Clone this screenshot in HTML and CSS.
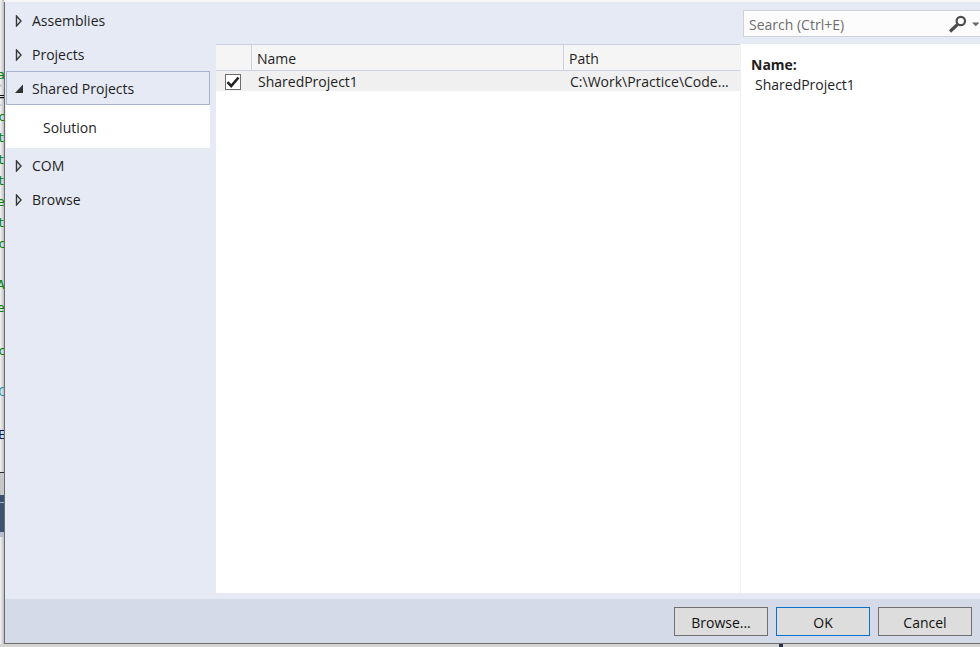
FILE: index.html
```html
<!DOCTYPE html>
<html lang="en">
<head>
<meta charset="utf-8">
<title>Reference Manager</title>
<link rel="stylesheet" href="styles.css">
</head>
<body>
<div class="screen">
  <div class="gutter" aria-hidden="true">
    <span class="band band-a"></span>
    <span class="band band-b"></span>
    <span class="band band-c"></span>
    <span class="band band-d"></span>
    <span class="band band-e"></span>
    <span class="band band-f"></span>
    <span class="code g1">a</span>
    <span class="code dark g2">=</span>
    <span class="code g3">c</span>
    <span class="code g4">t</span>
    <span class="code g5">t</span>
    <span class="code g6">t</span>
    <span class="code g7">e</span>
    <span class="code g8">t</span>
    <span class="code g9">c</span>
    <span class="code g10">A</span>
    <span class="code g11">e</span>
    <span class="code g12">c</span>
    <span class="code teal g13">C</span>
    <span class="code navy g14">E</span>
  </div>
  <div class="dialog">
    <div class="dialog-body">
      <nav class="tree">
        <div class="tree-row">
          <svg class="tri" width="8" height="12" viewBox="0 0 8 12"><path d="M1.5 1 6 6 1.5 11Z" fill="none" stroke="#3a3a3a" stroke-width="1.4"/></svg>
          <span>Assemblies</span>
        </div>
        <div class="tree-row">
          <svg class="tri" width="8" height="12" viewBox="0 0 8 12"><path d="M1.5 1 6 6 1.5 11Z" fill="none" stroke="#3a3a3a" stroke-width="1.4"/></svg>
          <span>Projects</span>
        </div>
        <div class="tree-row selected">
          <svg class="tri" width="8" height="12" viewBox="0 0 8 12"><path d="M0 10 8 1.5V10Z" fill="#333"/></svg>
          <span>Shared Projects</span>
        </div>
        <div class="tree-child">Solution</div>
        <div class="tree-row">
          <svg class="tri" width="8" height="12" viewBox="0 0 8 12"><path d="M1.5 1 6 6 1.5 11Z" fill="none" stroke="#3a3a3a" stroke-width="1.4"/></svg>
          <span>COM</span>
        </div>
        <div class="tree-row">
          <svg class="tri" width="8" height="12" viewBox="0 0 8 12"><path d="M1.5 1 6 6 1.5 11Z" fill="none" stroke="#3a3a3a" stroke-width="1.4"/></svg>
          <span>Browse</span>
        </div>
      </nav>
      <div class="content">
        <div class="topbar">
          <div class="search">
            <span class="search-text">Search (Ctrl+E)</span>
            <svg class="search-icon" width="32" height="22" viewBox="0 0 32 22">
              <circle cx="13.8" cy="8" r="4.2" fill="none" stroke="#4d4d4d" stroke-width="2.2"/>
              <path d="M10.5 11.5 3 18.5" stroke="#4d4d4d" stroke-width="3.2" fill="none"/>
              <path d="M25 9.5h7.5l-3.7 3.7Z" fill="#666"/>
            </svg>
          </div>
        </div>
        <div class="panels">
          <div class="list">
            <div class="list-head">
              <div class="cell cell-check"></div>
              <div class="cell cell-name">Name</div>
              <div class="cell cell-path">Path</div>
            </div>
            <div class="list-row">
              <div class="cell cell-check">
                <span class="checkbox">
                  <svg width="14" height="14" viewBox="0 0 14 14"><path d="M1.5 7.2 5.2 11 12.5 2.5" fill="none" stroke="#222" stroke-width="2.6"/></svg>
                </span>
              </div>
              <div class="cell cell-name">SharedProject1</div>
              <div class="cell cell-path">C:\Work\Practice\Code...</div>
            </div>
          </div>
          <aside class="details">
            <div class="details-label">Name:</div>
            <div class="details-value">SharedProject1</div>
          </aside>
        </div>
      </div>
    </div>
    <footer class="footer">
      <button class="btn" type="button">Browse...</button>
      <button class="btn btn-default" type="button">OK</button>
      <button class="btn" type="button">Cancel</button>
    </footer>
  </div>
  <span class="tick"></span>
</div>
</body>
</html>
```
FILE: styles.css
```css
* { box-sizing: border-box; }
html, body { margin: 0; padding: 0; }
body {
  width: 980px;
  height: 647px;
  overflow: hidden;
  background: #d0d0d0;
  font-family: "Open Sans", "Noto Sans", "Liberation Sans", sans-serif;
  font-size: 14px;
  color: #1e1e1e;
}
.screen {
  position: relative;
  width: 980px;
  height: 647px;
  display: flex;
  overflow: hidden;
  background: linear-gradient(#f6f6f6 0 2px, #d4d4d4 2px 644px);
}
.gutter {
  position: relative;
  flex: 0 0 4px;
  height: 644px;
  overflow: hidden;
  background: linear-gradient(90deg, #f4f4f4 0, #e6e6e6 1px, #d0d0d0 3px, #b4b4b4 4px);
}
.band { position: absolute; left: 0; width: 4px; }
.band-a { top: 84px; height: 3px; background: #cfcfcf; }
.band-b { top: 104px; height: 2px; background: #cfcfcf; }
.band-c { top: 472px; height: 1px; background: #2a2a3a; }
.band-d { top: 473px; height: 22px; background: #c6c6c6; }
.band-e { top: 495px; height: 37px; background: linear-gradient(#3c4f72 0 7px, #aab0bf 7px 8px, #40506f 8px); }
.band-f { top: 532px; height: 5px; background: #b9bed0; }
.code {
  position: absolute;
  left: -3px;
  font-family: "DejaVu Sans Mono", monospace;
  font-size: 13px;
  line-height: 14px;
  color: #008000;
}
.dark { color: #111; }
.teal { color: #2b91af; }
.navy { color: #0b1a5e; }
.g1 { top: 68px; }
.g2 { top: 89px; }
.g3 { top: 110px; left: -2px; }
.g4 { top: 131px; }
.g5 { top: 153px; }
.g6 { top: 174px; }
.g7 { top: 195px; }
.g8 { top: 216px; }
.g9 { top: 237px; left: -2px; }
.g10 { top: 278px; }
.g11 { top: 301px; }
.g12 { top: 344px; left: -2px; }
.g13 { top: 385px; left: -2px; }
.g14 { top: 428px; left: -2px; }
.dialog {
  flex: 1;
  height: 642px;
  margin-top: 2px;
  display: flex;
  flex-direction: column;
  border-left: 1px solid #6d6d6d;
  border-bottom: 1px solid #6d6d6d;
  background: #e6eaf5;
}
.dialog-body { flex: 0 0 597px; display: flex; }
.tree { flex: 0 0 211px; padding: 2px 0 0 1px; }
.tree-row {
  height: 34px;
  width: 204px;
  display: flex;
  align-items: center;
  gap: 9px;
  padding-left: 8px;
  border: 1px solid transparent;
  white-space: nowrap;
}
.tree-row span { line-height: 1; }
.tree-row.selected {
  margin-top: -1px;
  padding-top: 2px;
  border-color: #a9b4cf;
}
.tri { flex: none; }
.tree-child {
  height: 43px;
  width: 204px;
  margin-bottom: 1px;
  padding-left: 37px;
  background: #fff;
  line-height: 45px;
}
.content { flex: 1; display: flex; flex-direction: column; min-width: 0; }
.topbar { flex: 0 0 42px; padding: 8px 0 0 527px; }
.search {
  height: 27px;
  display: flex;
  align-items: center;
  justify-content: space-between;
  padding-left: 5px;
  background: #fcfcfd;
  border: 1px solid #cdd2de;
  border-right: 0;
  overflow: hidden;
}
.search-text { color: #6d6d6d; line-height: 1; padding-top: 2px; }
.search-icon { flex: none; margin-right: 1px; }
.panels { flex: 0 0 549px; display: flex; background: #fff; }
.list { flex: 0 0 524px; background: #fff; }
.list-head {
  height: 27px;
  display: flex;
  background: #f5f5f5;
  border-top: 1px solid #ccd0e0;
  border-bottom: 1px solid #ccd0e0;
}
.list-row {
  height: 20px;
  display: flex;
  background: #f0f0f0;
}
.cell {
  display: flex;
  align-items: center;
  white-space: nowrap;
  line-height: 1;
  padding: 2px 0 0 6px;
}
.list-head .cell { padding-left: 5px; }
.cell-check { flex: 0 0 36px; }
.list-row .cell-check { padding-left: 9px; }
.cell-name { flex: 0 0 312px; }
.cell-path { flex: 0 0 176px; }
.list-head .cell-check, .list-head .cell-name { border-right: 1px solid #ccd0e0; }
.checkbox {
  width: 16px;
  height: 16px;
  border: 1px solid #6d6d6d;
  background: #fff;
  display: flex;
  align-items: center;
  justify-content: center;
}
.details {
  flex: 1;
  border-left: 1px solid #eef0f6;
  padding: 12px 0 0 10px;
}
.details-label { font-weight: 700; line-height: 18px; }
.details-value { padding-left: 4px; margin-top: 2px; line-height: 18px; }
.footer {
  flex: 1;
  display: flex;
  justify-content: flex-end;
  gap: 8px;
  padding: 8px 8px 0 0;
  background: #d5dae8;
}
.btn {
  width: 94px;
  height: 29px;
  padding: 2px 0 0;
  border: 1px solid #707070;
  background: #dddddd;
  color: #111;
  font: inherit;
  line-height: 1;
}
.btn-default { border-color: #0a70c8; }
.tick {
  position: absolute;
  left: 779px;
  top: 644px;
  width: 4px;
  height: 3px;
  background: #26324f;
}
```
